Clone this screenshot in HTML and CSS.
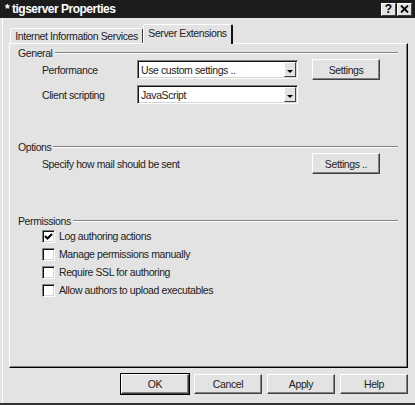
FILE: index.html
```html
<!DOCTYPE html>
<html lang="en">
<head>
    <meta charset="UTF-8">
    <title>tigserver Properties</title>
    <link rel="stylesheet" href="styles.css">
</head>
<body>
<div class="dialog">
    <div class="title-bar">
        <span class="title">* tigserver Properties</span>
        <div class="title-btns">
            <span class="tbtn">?</span>
            <span class="tbtn">
                <svg width="9" height="8" viewBox="0 0 9 8"><path d="M1 0.5 L8 7.5 M8 0.5 L1 7.5" stroke="#000" stroke-width="1.8"/></svg>
            </span>
        </div>
    </div>

    <div class="dlg-body">
        <div class="tabs">
            <div class="tab">Internet Information Services</div>
            <div class="tab active">Server Extensions</div>
        </div>

        <div class="panel">
            <!-- General -->
            <div class="group-head"><span>General</span><i class="rule"></i></div>
            <div class="row">
                <span class="lbl">Performance</span>
                <div class="combo"><span class="combo-txt">Use custom settings ..</span><b class="arrow"></b></div>
                <button class="btn row-btn" type="button">Settings</button>
            </div>
            <div class="row row-2">
                <span class="lbl">Client scripting</span>
                <div class="combo"><span class="combo-txt">JavaScript</span><b class="arrow"></b></div>
            </div>

            <!-- Options -->
            <div class="group-head opts"><span>Options</span><i class="rule"></i></div>
            <div class="row">
                <span class="lbl wide">Specify how mail should be sent</span>
                <button class="btn row-btn" type="button">Settings ..</button>
            </div>

            <!-- Permissions -->
            <div class="group-head perms"><span>Permissions</span><i class="rule"></i></div>
            <div class="chk-row">
                <span class="chk"><svg width="9" height="9" viewBox="0 0 9 9"><path d="M1 4 L3.5 6.5 L8 2" fill="none" stroke="#000" stroke-width="2"/></svg></span>
                <span>Log authoring actions</span>
            </div>
            <div class="chk-row">
                <span class="chk"></span>
                <span>Manage permissions manually</span>
            </div>
            <div class="chk-row">
                <span class="chk"></span>
                <span>Require SSL for authoring</span>
            </div>
            <div class="chk-row">
                <span class="chk"></span>
                <span>Allow authors to upload executables</span>
            </div>
        </div>

        <div class="footer">
            <button class="btn foot-btn default" type="button">OK</button>
            <button class="btn foot-btn" type="button">Cancel</button>
            <button class="btn foot-btn" type="button">Apply</button>
            <button class="btn foot-btn" type="button">Help</button>
        </div>
    </div>
</div>
</body>
</html>
```

FILE: styles.css
```css
* {
    box-sizing: border-box;
}

body {
    margin: 0;
    background-color: #e3e3e3;
    font-family: "Liberation Sans", Arial, sans-serif;
    font-size: 10.5px;
    letter-spacing: -0.4px;
    color: #222;
}

.dialog {
    width: 415px;
    height: 405px;
    display: flex;
    flex-direction: column;
    background-color: #e3e3e3;
    border-bottom: 2px solid #333;
}

/* title bar */
.title-bar {
    height: 18px;
    flex: none;
    display: flex;
    align-items: center;
    justify-content: space-between;
    padding: 0 3px 0 5px;
    background-color: #1c1c1c;
}

.title {
    color: #fff;
    font-weight: bold;
    font-size: 12px;
    letter-spacing: -0.5px;
}

.title-btns {
    display: flex;
    gap: 1px;
}

.tbtn {
    width: 15px;
    height: 13px;
    display: flex;
    align-items: center;
    justify-content: center;
    background-color: #e3e3e3;
    border: 1px solid;
    border-color: #fff #404040 #404040 #fff;
    font-weight: bold;
    font-size: 12px;
    letter-spacing: 0;
    line-height: 1;
    color: #000;
}

/* body */
.dlg-body {
    flex: 1;
    display: flex;
    flex-direction: column;
    margin-left: 2px;
    padding-left: 6px;
    border-left: 1px solid #fff;
}

.tabs {
    height: 25px;
    flex: none;
    display: flex;
    align-items: flex-end;
    padding-left: 1px;
}

.tab {
    height: 15px;
    width: 133px;
    display: flex;
    align-items: center;
    justify-content: center;
    border: 1px solid;
    border-bottom: none;
    border-color: #fff #404040 transparent #fff;
    border-radius: 2px 2px 0 0;
}

.tab.active {
    width: 90px;
    height: 20px;
    margin-bottom: -1px;
    padding-bottom: 3px;
    position: relative;
    z-index: 1;
    background-color: #e3e3e3;
    border-right: 2px solid #111;
}

.panel {
    width: 399px;
    height: 325px;
    flex: none;
    padding: 2px 9px 0 8px;
    border: 1px solid;
    border-color: #fff #000 #000 #fff;
    box-shadow: inset -1px -1px #808080;
}

.group-head {
    height: 13px;
    display: flex;
    align-items: center;
}

.group-head .rule {
    flex: 1;
    margin-left: 2px;
    border-top: 1px solid #808080;
    border-bottom: 1px solid #fff;
}

.group-head.opts {
    margin-top: 35px;
}

.group-head.perms {
    margin-top: 40px;
}

.row {
    height: 21px;
    display: flex;
    align-items: center;
    padding-left: 24px;
}

.row-2 {
    margin-top: 4px;
}

.lbl {
    width: 95px;
}

.lbl.wide {
    width: 256px;
}

.combo {
    width: 161px;
    height: 19px;
    display: flex;
    align-items: stretch;
    background-color: #fff;
    border: 1px solid;
    border-color: #808080 #fff #fff #808080;
    box-shadow: inset 1px 1px #111, inset -1px -1px #d4d4d4;
    padding: 1px 1px 1px 2px;
}

.combo-txt {
    flex: 1;
    display: flex;
    align-items: center;
    padding-left: 1px;
}

.arrow {
    width: 12px;
    display: flex;
    align-items: center;
    justify-content: center;
    background-color: #e3e3e3;
    border: 1px solid;
    border-color: #fff #404040 #404040 #fff;
}

.arrow::after {
    content: "";
    margin-top: 3px;
    border-left: 3px solid transparent;
    border-right: 3px solid transparent;
    border-top: 3px solid #000;
}

.btn {
    height: 21px;
    padding: 0;
    background-color: #e3e3e3;
    border: 1px solid;
    border-color: #fff #404040 #404040 #fff;
    box-shadow: inset -1px -1px #808080;
    font-family: inherit;
    font-size: inherit;
    letter-spacing: inherit;
    color: #222;
}

.row-btn {
    width: 68px;
    margin-left: 14px;
}

.chk-row {
    height: 18px;
    display: flex;
    align-items: center;
    gap: 4px;
    padding-left: 24px;
}

.chk {
    width: 13px;
    height: 13px;
    display: flex;
    align-items: center;
    justify-content: center;
    background-color: #fff;
    border: 1px solid;
    border-color: #808080 #fff #fff #808080;
    box-shadow: inset 1px 1px #111, inset -1px -1px #d4d4d4;
}

.footer {
    display: flex;
    justify-content: flex-end;
    gap: 5px;
    margin-top: 6px;
    padding-right: 7px;
}

.foot-btn {
    width: 68px;
    height: 20px;
}

.foot-btn.default {
    outline: 1px solid #000;
}
```
